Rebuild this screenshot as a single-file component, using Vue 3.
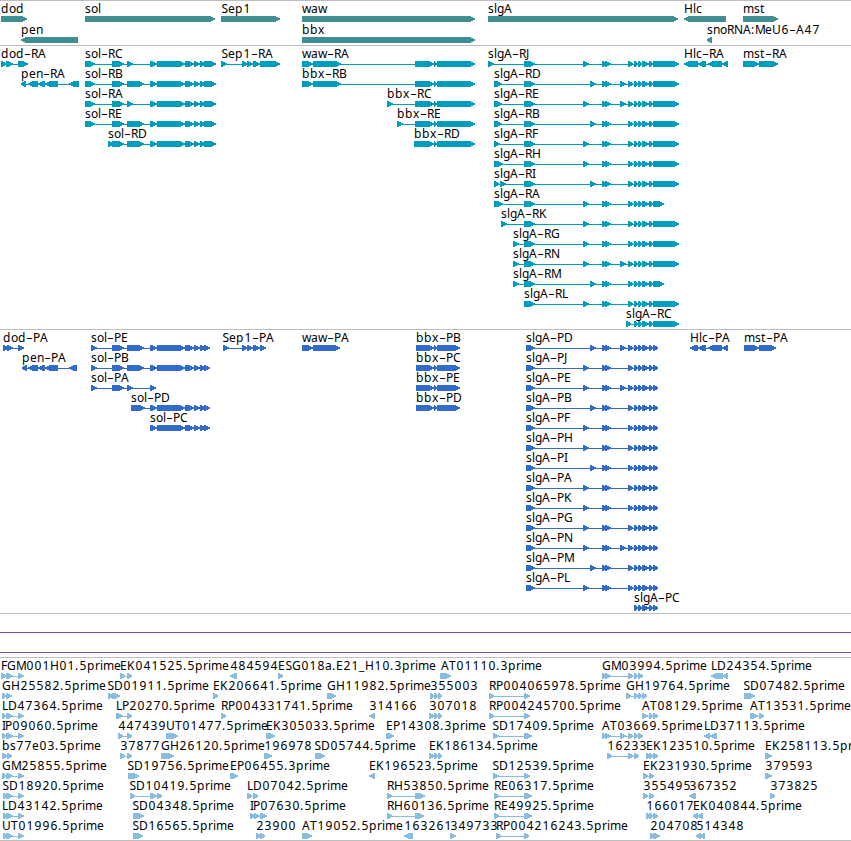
<template>
  <main class="browser">
    <section
      v-for="track in tracks"
      :key="track.name"
      class="track"
      :class="`track--${track.name}`"
      :aria-label="track.name"
    >
      <svg class="track__canvas" width="851" :height="track.height">
        <g v-for="(feature, i) in track.features" :key="i" class="feature">
          <rect
            v-if="feature.exons.length > 1"
            class="feature__intron"
            :x="feature.start"
            :y="feature.base + 6"
            :width="feature.end - feature.start"
            height="1"
          />
          <polygon
            v-for="(points, j) in feature.exons"
            :key="j"
            class="feature__exon"
            :points="points"
          />
          <text class="feature__label" :x="feature.xs" :y="feature.base">{{ feature.label }}</text>
        </g>
        <rect
          v-for="y in track.rules"
          :key="y"
          class="track__rule"
          x="0"
          :y="y"
          width="851"
          height="1"
        />
      </svg>
    </section>
  </main>
</template>

<script setup>
// whole-pixel glyph advances for the feature labels
const advances = {
  A: 8, B: 7, C: 8, D: 9, E: 7, F: 6, G: 9, H: 9, I: 3, J: 4, K: 8, L: 6, M: 10,
  N: 9, P: 7, R: 7, S: 7, T: 7, U: 9,
  a: 7, b: 8, c: 6, d: 8, e: 7, g: 7, i: 3, l: 3, m: 11, n: 7, o: 7, p: 8, r: 5,
  s: 6, t: 5, w: 9, x: 7, '–': 7, '.': 4, ':': 4, _: 6
}

const glyphPositions = (label, x) => {
  const xs = []
  for (const ch of label) {
    // centre the narrow glyphs in their cells
    xs.push(/[\dS–]/.test(ch) ? x + 0.5 : x)
    x += advances[ch] ?? 8
  }
  return xs.join(' ')
}

const arrow = ([a, b], base, reverse, h) => {
  const tip = Math.min(6, b - a) - 1
  const top = base + 3
  const mid = top + h / 2
  const bottom = top + h
  return reverse
    ? `${b},${top} ${a + tip},${top} ${a},${mid - 0.7} ${a},${mid + 0.7} ${a + tip},${bottom} ${b},${bottom}`
    : `${a},${top} ${b - tip},${top} ${b},${mid - 0.7} ${b},${mid + 0.7} ${b - tip},${bottom} ${a},${bottom}`
}

// row: [label, label x, 'start-end start-end ...', reverse]
const layout = (rows, first, step = 20, h = 6) =>
  rows.flatMap((row, i) =>
    row.map(([name, x, spans, reverse]) => {
      const label = name.replace('-', '–')
      const blocks = spans.split(' ').map((s) => s.split('-').map(Number))
      const base = first + i * step
      return {
        label,
        base,
        xs: glyphPositions(label, x),
        start: blocks[0][0],
        end: blocks[blocks.length - 1][1],
        exons: blocks.map((b) => arrow(b, base, reverse, h))
      }
    })
  )

const R = true

const genes = [
  [
    ['dod', 1, '1-27'],
    ['sol', 85, '85-215'],
    ['Sep1', 221, '221-280'],
    ['waw', 302, '302-475'],
    ['slgA', 488, '488-678'],
    ['Hlc', 684, '684-726', R],
    ['mst', 743, '743-778']
  ],
  [
    ['pen', 21, '21-78', R],
    ['bbx', 302, '302-475'],
    ['snoRNA:MeU6-A47', 707, '707-712', R]
  ]
]

const solEnd = '150-157 157-185 185-194 194-200 200-205 204-216'
const solShort = `85-95 112-124 127-133 ${solEnd}`
const solLong = `85-95 112-124 127-144 ${solEnd}`
const bbxEnd = '434-437 437-475'
const near = '583-589 602-607 605-611'
const far = '590-596 602-607 605-611'
const extra = '620-626'
const slgCore = '634-638 638-642 642-649 649-653'
const slgEnd = `628-633 ${slgCore} 653-679`
const slgCut = `628-633 ${slgCore} 653-664`

const transcripts = [
  [
    ['dod-RA', 1, '1-6 6-13 18-28'],
    ['sol-RC', 85, solShort],
    ['Sep1-RA', 221, '221-227 242-247 247-253 253-260 260-280'],
    ['waw-RA', 302, `302-313 313-341 415-434 ${bbxEnd}`],
    ['slgA-RJ', 488, `488-494 524-535 ${near} ${slgEnd}`],
    ['Hlc-RA', 684, '684-698 698-706 708-722 722-728', R],
    ['mst-RA', 743, '743-759 759-778']
  ],
  [
    ['pen-RA', 21, '21-26 28-38 38-45 45-58 69-79', R],
    ['sol-RB', 85, solLong],
    ['bbx-RB', 302, `302-313 313-341 415-434 ${bbxEnd}`],
    ['slgA-RD', 494, `494-502 524-535 ${far} ${extra} ${slgEnd}`]
  ],
  [
    ['sol-RA', 85, solShort],
    ['bbx-RC', 387, `387-393 415-434 ${bbxEnd}`],
    ['slgA-RE', 494, `494-502 524-535 ${near} ${extra} ${slgEnd}`]
  ],
  [
    ['sol-RE', 85, solLong],
    ['bbx-RE', 397, `397-403 415-434 ${bbxEnd}`],
    ['slgA-RB', 494, `494-502 524-535 ${far} ${slgEnd}`]
  ],
  [
    ['sol-RD', 108, `108-113 112-124 127-144 ${solEnd}`],
    ['bbx-RD', 414, `414-434 ${bbxEnd}`],
    ['slgA-RF', 494, `494-500 524-535 ${near} ${slgEnd}`]
  ],
  [['slgA-RH', 494, `494-503 524-535 ${near} ${slgEnd}`]],
  [['slgA-RI', 494, `494-499 500-506 524-535 ${far} ${slgEnd}`]],
  [['slgA-RA', 494, `494-503 524-535 ${near} ${slgCut}`]],
  [['slgA-RK', 501, `501-507 524-535 ${near} ${slgEnd}`]],
  [['slgA-RG', 513, `513-519 524-535 ${near} ${slgEnd}`]],
  [['slgA-RN', 513, `513-519 524-535 ${near} ${extra} ${slgEnd}`]],
  [['slgA-RM', 513, `513-519 524-535 ${far} ${slgCut}`]],
  [['slgA-RL', 524, `524-535 ${near} ${slgEnd}`]],
  [['slgA-RC', 626, `626-631 ${slgCore} 653-679`]]
]

const solCds = '150-157 157-185 185-194 194-200 200-205 204-210'
const bbxCds = '416-434 434-437 437-460'
const slgCds = `628-633 ${slgCore} 653-658`

const proteins = [
  [
    ['dod-PA', 3, '3-8 7-13 18-24'],
    ['sol-PE', 91, `91-97 112-124 127-144 ${solCds}`],
    ['Sep1-PA', 222, '223-229 242-247 247-253 253-260 260-266'],
    ['waw-PA', 302, '302-313 313-340'],
    ['bbx-PB', 416, bbxCds],
    ['slgA-PD', 526, `526-535 ${far} ${extra} ${slgCds}`],
    ['Hlc-PA', 690, '690-698 698-706 708-722 722-728', R],
    ['mst-PA', 744, '744-759 759-776']
  ],
  [
    ['pen-PA', 22, '22-27 28-38 38-45 45-58 69-77', R],
    ['sol-PB', 91, `91-97 112-124 127-144 ${solCds}`],
    ['bbx-PC', 416, bbxCds],
    ['slgA-PJ', 526, `526-535 ${near} ${slgCds}`]
  ],
  [
    ['sol-PA', 91, '91-97 112-124 127-133 150-156'],
    ['bbx-PE', 416, bbxCds],
    ['slgA-PE', 526, `526-535 ${near} ${extra} ${slgCds}`]
  ],
  [
    ['sol-PD', 131, `131-145 ${solCds}`],
    ['bbx-PD', 416, bbxCds],
    ['slgA-PB', 526, `526-535 ${far} ${slgCds}`]
  ],
  [
    ['sol-PC', 150, solCds],
    ['slgA-PF', 526, `526-535 ${near} ${slgCds}`]
  ],
  [['slgA-PH', 526, `526-535 ${near} ${slgCds}`]],
  [['slgA-PI', 526, `526-535 ${far} ${slgCds}`]],
  [['slgA-PA', 526, `526-535 ${near} ${slgCds}`]],
  [['slgA-PK', 526, `526-535 ${near} ${slgCds}`]],
  [['slgA-PG', 526, `526-535 ${near} ${slgCds}`]],
  [['slgA-PN', 526, `526-535 ${near} ${extra} ${slgCds}`]],
  [['slgA-PM', 526, `526-535 ${far} ${slgCds}`]],
  [['slgA-PL', 526, `526-535 ${near} ${slgCds}`]],
  [['slgA-PC', 634, `${slgCore} 653-658`]]
]

const ests = [
  [
    ['FGM001H01.5prime', 1, '1-6 6-13 18-24'],
    ['EK041525.5prime', 120, '120-125 127-132'],
    ['484594', 230, '230-237', R],
    ['ESG018a.E21_H10.3prime', 278, '278-283'],
    ['AT01110.3prime', 441, '440-451'],
    ['GM03994.5prime', 602, '602-607 605-611 628-633 634-638 638-643'],
    ['LD24354.5prime', 711, '711-723 723-728', R]
  ],
  [
    ['GH25582.5prime', 2, '2-6 6-12'],
    ['SD01911.5prime', 107, '108-113 112-120'],
    ['EK206641.5prime', 213, '213-218'],
    ['GH11982.5prime', 327, '327-336'],
    ['355003', 430, '430-434 434-438 438-442'],
    ['RP004065978.5prime', 489, '489-494 524-530'],
    ['GH19764.5prime', 626, '626-631 634-638 638-642 642-647'],
    ['SD07482.5prime', 743, '744-755']
  ],
  [
    ['LD47364.5prime', 2, '2-6 6-13 18-24'],
    ['LP20270.5prime', 116, '116-123 127-132'],
    ['RP004331741.5prime', 221, '221-226'],
    ['314166', 369, '369-375', R],
    ['307018', 429, '429-434 434-438 438-442'],
    ['RP004245700.5prime', 489, '489-494 524-530'],
    ['AT08129.5prime', 642, '642-648 649-653 653-658'],
    ['AT13531.5prime', 750, '750-758 759-764']
  ],
  [
    ['IP09060.5prime', 2, '2-6 6-13 18-24'],
    ['447439', 118, '118-123 127-132'],
    ['UT01477.5prime', 166, '166-178'],
    ['EK305033.5prime', 266, '266-275'],
    ['EP14308.3prime', 386, '386-394'],
    ['SD17409.5prime', 492, '493-499 524-532'],
    ['AT03669.5prime', 602, '602-607 605-611 620-626 628-633 634-638 638-643'],
    ['LD37113.5prime', 704, '704-710 710-717', R]
  ],
  [
    ['bs77e03.5prime', 2, '2-7 7-12'],
    ['37877', 120, '120-125 127-132'],
    ['GH26120.5prime', 161, '161-174'],
    ['196978', 264, '264-272'],
    ['SD05744.5prime', 314, '315-325'],
    ['EK186134.5prime', 429, '429-434 434-438 438-442'],
    ['16233', 607, '607-612 628-633 634-639'],
    ['EK123510.5prime', 646, '646-650 649-653 653-658'],
    ['EK258113.5prime', 765, '765-772']
  ],
  [
    ['GM25855.5prime', 2, '2-6 6-13 18-24'],
    ['SD19756.5prime', 127, '128-139'],
    ['EP06455.3prime', 230, '230-238'],
    ['EK196523.5prime', 369, '369-375', R],
    ['SD12539.5prime', 492, '493-499 524-530'],
    ['EK231930.5prime', 643, '643-648 649-654'],
    ['379593', 765, '765-772']
  ],
  [
    ['SD18920.5prime', 2, '3-7 6-13 18-24'],
    ['SD10419.5prime', 129, '130-135 150-157 157-162'],
    ['LD07042.5prime', 247, '247-252 253-258'],
    ['RH53850.5prime', 387, '387-392 415-425'],
    ['RE06317.5prime', 494, '494-499 524-532'],
    ['355495', 643, '643-648 649-654'],
    ['367352', 689, '689-696', R],
    ['373825', 770, '770-775']
  ],
  [
    ['LD43142.5prime', 2, '3-7 6-13 18-24'],
    ['SD04348.5prime', 132, '133-144'],
    ['IP07630.5prime', 250, '250-255 254-260 260-267'],
    ['RH60136.5prime', 387, '387-392 415-424'],
    ['RE49925.5prime', 494, '494-499 524-532'],
    ['166017', 646, '646-650 649-653 653-658'],
    ['EK040844.5prime', 693, '693-698 698-703', R]
  ],
  [
    ['UT01996.5prime', 2, '3-7 6-13 18-24'],
    ['SD16565.5prime', 132, '133-143'],
    ['23900', 256, '256-261 260-265'],
    ['AT19052.5prime', 302, '302-312'],
    ['163261', 404, '404-413', R],
    ['349733', 450, '450-456'],
    ['RP004216243.5prime', 496, '496-501 524-529'],
    ['204708', 650, '650-655 653-660'],
    ['514348', 696, '696-701 700-705', R]
  ]
]

const tracks = [
  { name: 'genes', height: 44, features: layout(genes, 12, 21) },
  { name: 'transcripts', height: 283, features: layout(transcripts, 12) },
  { name: 'proteins', height: 283, features: layout(proteins, 12) },
  { name: 'spans', height: 43, features: [], rules: [18, 38] },
  { name: 'ests', height: 182, features: layout(ests, 12) }
]
</script>

<style>
body {
  background: #fff;
  overflow: hidden;
}
</style>

<style scoped>
.browser {
  display: flex;
  flex-direction: column;
  width: 851px;
  border-bottom: 1px solid #bebebe;
  background: #fff;
  overflow: hidden;
}

.track {
  border-top: 1px solid #bebebe;
}

.track--genes {
  color: #3f8e93;
}

.track--transcripts {
  color: #009dbd;
}

.track--proteins {
  color: #316ccd;
}

.track--spans {
  color: #7550a8;
}

.track--ests {
  color: #89bddf;
}

.track__canvas {
  display: block;
}

.track__rule,
.feature__intron,
.feature__exon {
  fill: currentColor;
  shape-rendering: crispEdges;
}

.feature__label {
  font-family: 'Noto Sans', 'Open Sans', sans-serif;
  font-size: 12px;
  fill: #000;
}
</style>
